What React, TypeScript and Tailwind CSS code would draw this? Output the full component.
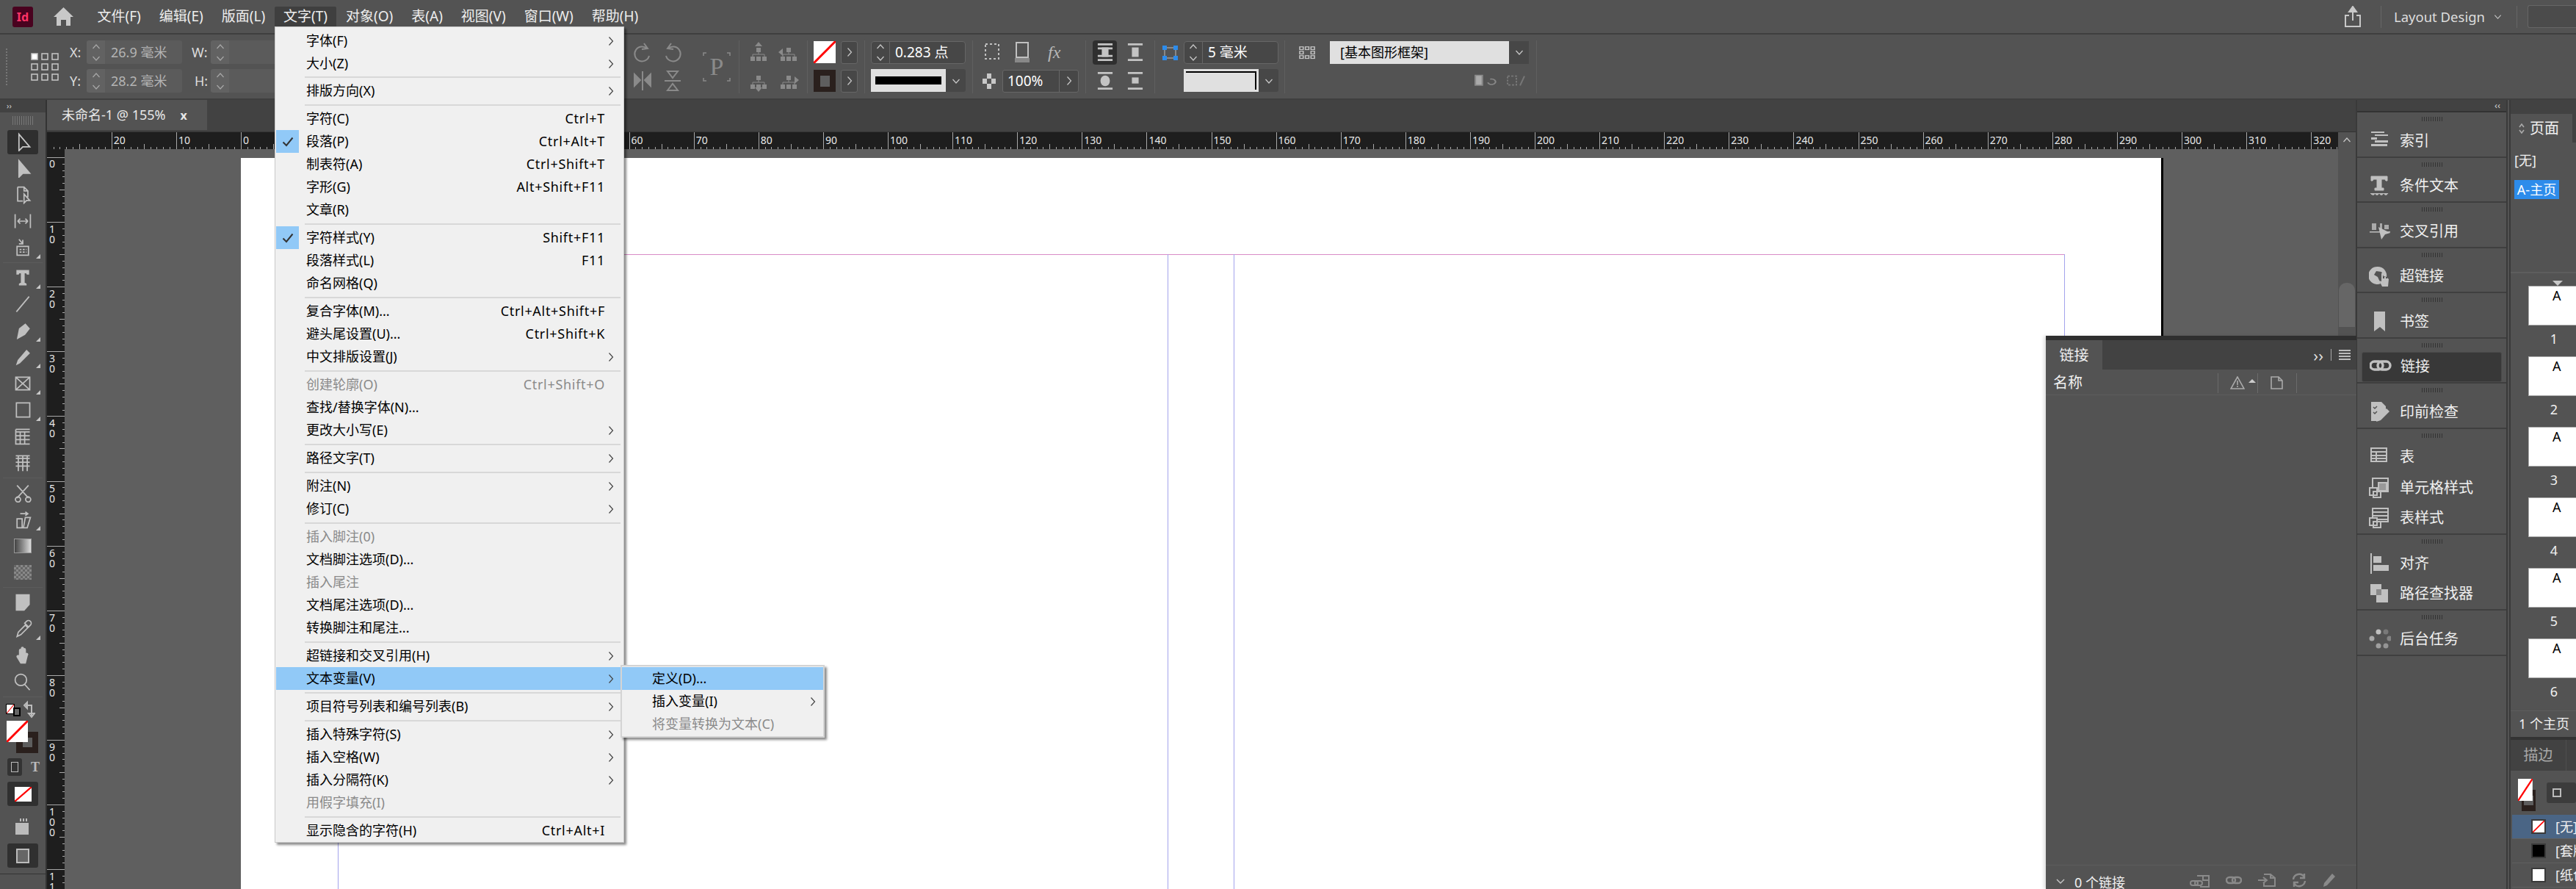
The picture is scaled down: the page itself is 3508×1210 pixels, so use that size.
import type { ReactNode } from "react";

const menuBar = ["文件(F)", "编辑(E)", "版面(L)", "文字(T)", "对象(O)", "表(A)", "视图(V)", "窗口(W)", "帮助(H)"];

type Row = { label?: string; keys?: string; arrow?: boolean; off?: boolean; check?: boolean; hot?: boolean; sep?: boolean; thin?: boolean };

const typeMenu: Row[] = [
  { label: "字体(F)", arrow: true },
  { label: "大小(Z)", arrow: true },
  { sep: true, thin: true },
  { label: "排版方向(X)", arrow: true },
  { sep: true },
  { label: "字符(C)", keys: "Ctrl+T" },
  { label: "段落(P)", keys: "Ctrl+Alt+T", check: true },
  { label: "制表符(A)", keys: "Ctrl+Shift+T" },
  { label: "字形(G)", keys: "Alt+Shift+F11" },
  { label: "文章(R)" },
  { sep: true },
  { label: "字符样式(Y)", keys: "Shift+F11", check: true },
  { label: "段落样式(L)", keys: "F11" },
  { label: "命名网格(Q)" },
  { sep: true },
  { label: "复合字体(M)...", keys: "Ctrl+Alt+Shift+F" },
  { label: "避头尾设置(U)...", keys: "Ctrl+Shift+K" },
  { label: "中文排版设置(J)", arrow: true },
  { sep: true },
  { label: "创建轮廓(O)", keys: "Ctrl+Shift+O", off: true },
  { label: "查找/替换字体(N)..." },
  { label: "更改大小写(E)", arrow: true },
  { sep: true },
  { label: "路径文字(T)", arrow: true },
  { sep: true },
  { label: "附注(N)", arrow: true },
  { label: "修订(C)", arrow: true },
  { sep: true },
  { label: "插入脚注(0)", off: true },
  { label: "文档脚注选项(D)..." },
  { label: "插入尾注", off: true },
  { label: "文档尾注选项(D)..." },
  { label: "转换脚注和尾注..." },
  { sep: true },
  { label: "超链接和交叉引用(H)", arrow: true },
  { label: "文本变量(V)", arrow: true, hot: true },
  { sep: true },
  { label: "项目符号列表和编号列表(B)", arrow: true },
  { sep: true },
  { label: "插入特殊字符(S)", arrow: true },
  { label: "插入空格(W)", arrow: true },
  { label: "插入分隔符(K)", arrow: true },
  { label: "用假字填充(I)", off: true },
  { sep: true },
  { label: "显示隐含的字符(H)", keys: "Ctrl+Alt+I" },
];

const Chevron = ({ dark = false }: { dark?: boolean }) => (
  <svg width="8" height="14" viewBox="0 0 8 14" fill="none" stroke={dark ? "#444" : "#c8c8c8"} strokeWidth="1.2">
    <path d="M1.5 1.5 6.5 7l-5 5.5" />
  </svg>
);

const Down = ({ size = 12 }: { size?: number }) => (
  <svg width={size} height={size} viewBox="0 0 12 12" fill="none" stroke="#c8c8c8" strokeWidth="1.2">
    <path d="M1.5 4 6 9l4.5-5" />
  </svg>
);

const Up = () => (
  <svg width="12" height="12" viewBox="0 0 12 12" fill="none" stroke="#c8c8c8" strokeWidth="1.2">
    <path d="M1.5 8 6 3l4.5 5" />
  </svg>
);

const NoneSwatch = ({ className }: { className: string }) => (
  <svg className={className} viewBox="0 0 30 30" preserveAspectRatio="none">
    <rect width="30" height="30" fill="#fff" />
    <path d="M0 30 30 0" stroke="#f00" strokeWidth="3" />
  </svg>
);

function MenuRow({ row }: { row: Row }) {
  if (row.sep) {
    return (
      <div className={`flex items-center pl-[39px] pr-[3px] ${row.thin ? "h-[6px]" : "h-[7px]"}`}>
        <div className="h-[2px] w-full bg-[#d8d8d8]" />
      </div>
    );
  }
  return (
    <div className={`flex h-[31px] items-center ${row.hot ? "bg-[#91c9f7]" : ""} ${row.off ? "text-[#8a8a8a]" : "text-black"}`}>
      <div className={`mr-[10px] flex h-[31px] w-[31px] items-center justify-center ${row.check ? "bg-[#91c9f7]" : ""}`}>
        {row.check && (
          <svg width="16" height="14" viewBox="0 0 16 14" fill="none" stroke="#333" strokeWidth="2">
            <path d="M1.5 7.5 6 12 14.5 1.5" />
          </svg>
        )}
      </div>
      <span className="flex-1 whitespace-nowrap">{row.label}</span>
      {row.keys && <span className="mr-[24px] whitespace-nowrap tracking-[0.7px]">{row.keys}</span>}
      {row.arrow && (
        <span className="mr-[12px]">
          <Chevron dark />
        </span>
      )}
    </div>
  );
}

function TypeMenu() {
  return (
    <div className="absolute left-[374px] top-[36px] w-[476px] border border-[#c8c8c8] bg-[#f0f0f0] px-px pt-[3px] text-[18px] shadow-[3px_3px_3px_rgba(0,0,0,0.45)]">
      {typeMenu.map((row, i) => (
        <MenuRow key={i} row={row} />
      ))}
    </div>
  );
}

function SubMenu() {
  return (
    <div className="absolute left-[845px] top-[905px] w-[278px] border-2 border-[#d4d4d4] bg-[#f0f0f0] py-px text-[18px] shadow-[3px_3px_3px_rgba(0,0,0,0.45)]">
      <div className="flex h-[31px] items-center bg-[#91c9f7] pl-[41px] text-black">定义(D)...</div>
      <div className="flex h-[31px] items-center justify-between pl-[41px] pr-[10px] text-black">
        插入变量(I)
        <Chevron dark />
      </div>
      <div className="flex h-[31px] items-center pl-[41px] text-[#8a8a8a]">将变量转换为文本(C)</div>
    </div>
  );
}

function TopBar() {
  return (
    <div className="flex h-[45px] items-center text-[19px] text-[#eeeeee]">
      <div className="ml-[17px] flex h-[28px] w-[28px] items-center justify-center rounded-[3px] bg-[#49021f] text-[16px] font-bold text-[#ff3366]">
        Id
      </div>
      <svg className="ml-[28px]" width="27" height="25" viewBox="0 0 27 25" fill="#c8c8c8">
        <path d="M13.5 0 27 13h-4v12h-6v-8h-7v8H4V13H0z" />
      </svg>
      <div className="ml-[20px] flex items-center">
        {menuBar.map((m) => (
          <div key={m} className={`mx-[0.5px] flex h-[28px] items-center rounded-t-[2px] px-[12px] ${m === "文字(T)" ? "bg-[#3f3f3f]" : ""}`}>
            {m}
          </div>
        ))}
      </div>
      <div className="ml-auto flex items-center">
        <svg width="24" height="30" viewBox="0 0 24 30" fill="none" stroke="#c8c8c8" strokeWidth="2">
          <path d="M7 13H2v15h20V13h-5M12 20V3" />
          <path d="M7 8l5-7 5 7z" fill="#c8c8c8" />
        </svg>
        <div className="ml-[26px] h-[30px] w-px bg-[#666]" />
        <span className="ml-[17px] whitespace-nowrap text-[18.5px] text-[#dddddd]">Layout Design</span>
        <span className="ml-[12px]">
          <Down size={11} />
        </span>
        <div className="ml-[20px] h-[30px] w-px bg-[#666]" />
        <div className="ml-[14px] h-[31px] w-[66px] rounded-l-[3px] border border-[#666] border-r-0 bg-[#4b4b4b]" />
      </div>
    </div>
  );
}

const Divider = () => <div className="mx-[5px] h-[72px] w-px shrink-0 bg-[#5f5f5f]" />;

function Field({ label, value, labelCls, w }: { label: string; value?: string; labelCls: string; w: string }) {
  return (
    <div className="flex h-[32px] items-center">
      <span className={`whitespace-nowrap text-[18px] text-[#dddddd] ${labelCls}`}>{label}</span>
      <div className={`flex h-[32px] items-center rounded-[3px] bg-[#5b5b5b] ${w}`}>
        <div className="flex h-full w-[25px] flex-col items-center justify-center gap-[3px] rounded-l-[3px] bg-[#656565] opacity-70">
          <Up />
          <Down />
        </div>
        <span className="ml-[8px] whitespace-nowrap text-[18px] text-[#b4b4b4]">{value}</span>
      </div>
    </div>
  );
}

function Stepper({ value }: { value: string }) {
  return (
    <div className="flex h-[31px] w-[129px] items-center rounded-[4px] border border-[#666] bg-[#474747]">
      <div className="flex h-full w-[25px] flex-col items-center justify-center gap-[3px] border-r border-[#666]">
        <Up />
        <Down />
      </div>
      <span className="ml-[7px] flex-1 whitespace-nowrap text-[19px] text-white">{value}</span>
    </div>
  );
}

function ControlBar() {
  const gray = "#8a8a8a";
  return (
    <div className="flex h-[91px] items-center overflow-hidden border-y-2 border-[#3f3f3f] bg-[#535353] py-[7px]">
      <div className="ml-[8px] h-[50px] w-[2px] shrink-0 border-l-2 border-dotted border-[#777]" />
      <svg className="ml-[32px] shrink-0" width="38" height="38" viewBox="0 0 38 38" fill="none" stroke="#c8c8c8" strokeWidth="1.5">
        {[0, 14, 28].map((y) =>
          [0, 14, 28].map((x) => <rect key={`${x}-${y}`} x={x + 1} y={y + 1} width="8" height="8" fill={x + y === 0 ? "#fff" : "none"} />),
        )}
      </svg>
      <div className="ml-[15px] flex shrink-0 flex-col gap-[7px]">
        <Field label="X:" value="26.9 毫米" labelCls="w-[23px]" w="w-[130px]" />
        <Field label="Y:" value="28.2 毫米" labelCls="w-[23px]" w="w-[130px]" />
      </div>
      <div className="ml-[13px] flex shrink-0 flex-col gap-[7px]">
        <Field label="W:" labelCls="w-[26px]" w="w-[560px]" />
        <Field label="H:" labelCls="w-[26px] pl-[4px]" w="w-[560px]" />
      </div>

      <div className="ml-[7px] grid w-[82px] shrink-0 grid-cols-2 gap-y-[6px]">
        {[0, 1, 2, 3].map((i) => (
          <div key={i} className="flex h-[32px] items-center justify-center">
            <svg width="26" height="30" viewBox="0 0 26 30" fill="none" stroke={gray} strokeWidth="2">
              {i < 2 ? (
                <path d={i === 0 ? "M19 9a10 10 0 1 0 3 10M15 2l5 7-8 1" : "M7 9a10 10 0 1 1-3 10M11 2 6 9l8 1"} />
              ) : (
                <path d={i === 2 ? "M13 2v26M2 6l8 8-8 8zM24 6l-8 8 8 8z" : "M2 15h22M6 2l7 9 7-9zM6 28l7-9 7 9z"} fill={i === 2 ? gray : "none"} />
              )}
            </svg>
          </div>
        ))}
      </div>
      <svg className="ml-[21px] shrink-0" width="38" height="40" viewBox="0 0 38 40" fill="none" stroke="#8a8a8a" strokeWidth="1.5">
        <path d="M1 5V1h4M33 1h4v4M1 35v4h4M33 39h4v-4" />
        <text x="19" y="31" textAnchor="middle" fontFamily="'Liberation Serif', serif" fontSize="34" fill="#8a8a8a" stroke="none">
          P
        </text>
      </svg>
      <div className="ml-[6px]">
        <Divider />
      </div>
      <div className="grid w-[82px] shrink-0 grid-cols-2 gap-y-[6px]">
        {[0, 1, 2, 3].map((i) => (
          <div key={i} className="flex h-[32px] items-center justify-center">
            <svg width="28" height="30" viewBox="0 0 28 30" fill={gray}>
              <path d="M11 8h6v6h-6zM3 20h6v6H3zM11 20h6v6h-6zM19 20h6v6h-6z" />
              <path d="M14 14v3M6 20v-3h16v3" stroke={gray} fill="none" />
              <path d={i === 0 ? "M14 0l5 6H9z" : i === 2 ? "M14 30l5-6H9z" : i === 1 ? "M0 14l6-5v10z" : "M28 14l-6-5v10z"} />
            </svg>
          </div>
        ))}
      </div>
      <Divider />
      <div className="ml-[3px] flex shrink-0 flex-col gap-[7px]">
        <div className="flex h-[32px] items-center gap-[7px]">
          <NoneSwatch className="h-[30px] w-[30px]" />
          <div className="flex h-[31px] w-[23px] items-center justify-center rounded-[3px] border border-[#666] bg-[#474747]">
            <Chevron />
          </div>
        </div>
        <div className="flex h-[32px] items-center gap-[7px]">
          <div className="flex h-[30px] w-[30px] items-center justify-center bg-[#2a201d]">
            <div className="h-[15px] w-[13px] bg-[#5e5e5e]" />
          </div>
          <div className="flex h-[31px] w-[23px] items-center justify-center rounded-[3px] border border-[#666] bg-[#474747]">
            <Chevron />
          </div>
        </div>
      </div>
      <div className="ml-[4px]">
        <Divider />
      </div>
      <div className="ml-[3px] flex shrink-0 flex-col gap-[7px]">
        <Stepper value="0.283 点" />
        <div className="flex h-[31px] w-[129px] items-center rounded-[3px] bg-[#474747]">
          <div className="flex h-full w-[102px] items-center justify-center bg-[#e0e0e0]">
            <div className="h-[11px] w-[90px] bg-black" />
          </div>
          <div className="flex flex-1 justify-center">
            <Down />
          </div>
        </div>
      </div>
      <div className="ml-[4px]">
        <Divider />
      </div>
      <div className="ml-[8px] flex w-[131px] shrink-0 flex-col gap-[7px]">
        <div className="flex h-[32px] items-center pl-[2px]">
          <svg width="24" height="26" viewBox="0 0 24 26" fill="none" stroke="#c0c0c0" strokeWidth="2">
            <rect x="2" y="2" width="18" height="20" strokeDasharray="3 3" />
          </svg>
          <svg className="ml-[18px]" width="20" height="30" viewBox="0 0 20 30">
            <rect x="2" y="2" width="16" height="20" fill="none" stroke="#c0c0c0" strokeWidth="2" />
            <rect x="0" y="23" width="20" height="6" fill="#888" />
          </svg>
          <span className="ml-[25px] font-['Liberation_Serif',serif] text-[24px] italic text-[#b8b8b8]">fx</span>
        </div>
        <div className="flex h-[32px] items-center gap-[9px]">
          <div className="h-[21px] w-[18px] shrink-0 bg-[repeating-conic-gradient(#c8c8c8_0_25%,#555_0_50%)] bg-[length:12px_14px]" />
          <div className="flex h-[31px] w-[104px] items-center rounded-[3px] border border-[#666] bg-[#474747]">
            <span className="ml-[6px] flex-1 text-[19px] text-white">100%</span>
            <div className="flex h-full w-[26px] items-center justify-center border-l border-[#666]">
              <Chevron />
            </div>
          </div>
        </div>
      </div>
      <div className="ml-[4px]">
        <Divider />
      </div>
      <div className="ml-[4px] grid w-[74px] shrink-0 grid-cols-[33px_33px] gap-x-[8px] gap-y-[6px]">
        {[0, 1, 2, 3].map((i) => (
          <div key={i} className={`flex h-[33px] items-center justify-center rounded-[4px] ${i === 0 ? "bg-[#2f2f2f]" : ""}`}>
            <svg width="22" height="26" viewBox="0 0 24 26" fill="#c4c4c4">
              <path d="M1 0h22v3H1zM1 23h22v3H1z" />
              {i === 2 ? <ellipse cx="12" cy="13" rx="7" ry="8" /> : <rect x="7" y={i === 3 ? 8 : 6} width="10" height={i === 3 ? 9 : 14} />}
              {i === 0 && <path d="M1 6h22v3H1zM1 17h22v3H1z" />}
            </svg>
          </div>
        ))}
      </div>
      <div className="ml-[5px]">
        <Divider />
      </div>
      <div className="ml-[5px] flex shrink-0 flex-col gap-[7px]">
        <div className="flex items-center gap-[8px]">
          <svg width="21" height="20" viewBox="0 0 21 20" fill="#2d8ceb">
            <path d="M0 0h6v6H0zM15 0h6v6h-6zM0 14h6v6H0zM15 14h6v6h-6z" />
            <path d="M6 3h9M6 17h9M3 6v8M18 6v8" stroke="#888" strokeWidth="2" />
          </svg>
          <Stepper value="5 毫米" />
        </div>
        <div className="ml-[29px] flex h-[31px] w-[129px] items-center rounded-[3px] bg-[#474747]">
          <div className="h-full w-[102px] bg-[#e0e0e0] p-[3px]">
            <div className="h-full border-r-2 border-t-2 border-black" />
          </div>
          <div className="flex flex-1 justify-center">
            <Down />
          </div>
        </div>
      </div>
      <div className="ml-[3px]">
        <Divider />
      </div>
      <svg className="mb-[38px] ml-[14px] shrink-0" width="23" height="18" viewBox="0 0 24 24" preserveAspectRatio="none" fill="none" stroke="#c4c4c4" strokeWidth="1.6">
        <rect x="1" y="1" width="5" height="5" />
        <rect x="9" y="1" width="5" height="5" />
        <rect x="17" y="1" width="5" height="5" />
        <rect x="1" y="9" width="5" height="5" />
        <rect x="17" y="9" width="5" height="5" />
        <rect x="1" y="17" width="5" height="5" />
        <rect x="9" y="17" width="5" height="5" />
        <rect x="17" y="17" width="5" height="5" />
      </svg>
      <div className="ml-[19px] flex w-[271px] shrink-0 flex-col gap-[7px]">
        <div className="flex h-[31px] items-center bg-[#474747]">
          <div className="flex h-full w-[244px] items-center bg-[#e0e0e0] pl-[14px] text-[18px] text-black">[基本图形框架]</div>
          <div className="flex flex-1 justify-center">
            <Down />
          </div>
        </div>
        <div className="flex h-[32px] items-center justify-end gap-[12px] pr-[4px]">
          <svg width="32" height="18" viewBox="0 0 30 24" preserveAspectRatio="none" fill="none" stroke="#888" strokeWidth="2">
            <rect x="1" y="2" width="9" height="18" fill="#aaa" />
            <path d="M20 9a5 5 0 1 1-3 6" />
          </svg>
          <svg width="26" height="16" viewBox="0 0 26 20" preserveAspectRatio="none" fill="none" stroke="#777" strokeWidth="2">
            <rect x="1" y="2" width="12" height="15" strokeDasharray="3 2" />
            <path d="M24 2 18 18" />
          </svg>
        </div>
      </div>
      <div className="ml-[5px]">
        <Divider />
      </div>
    </div>
  );
}

// toolbar icons, all in a 30x30 box
const toolPaths: { d: string; fill?: boolean; corner?: boolean }[] = [
  { d: "M9 3v26l6-6h11z" },
  { d: "M9 3v26l6-6h11z", fill: true },
  { d: "M7 3h10l6 6v10M7 3v22h8M17 3v6h6M17 14v14l4-4h5z" },
  { d: "M3 4v22M27 4v22M7 15h16M7 15l4-4M7 15l4 4M23 15l-4-4M23 15l-4 4" },
  { d: "M6 13h18v14H6zM10 18h3M15 18h3M20 18h1M10 22h3M15 22h3M20 22h1M9 2l6 7M15 3v6h-6", corner: true },
  { d: "M6 4h18v5h-2l-1-2h-4v16l3 2v1H10v-1l3-2V7H9L8 9H6z", fill: true, corner: true },
  { d: "M5 27 25 3" },
  { d: "M7 27l3-15 9-7 6 7-7 9zM7 27l8-8", fill: true, corner: true },
  { d: "M6 26l2-6L21 5l4 4L10 24zM6 26l4-2", fill: true, corner: true },
  { d: "M4 5h22v20H4zM4 5l22 20M26 5 4 25", corner: true },
  { d: "M5 4h21v22H5z", corner: true },
  { d: "M4 4h22M4 8h22M4 4v24M4 14h22M4 20h22M4 27h22M11 8v6M18 8v6M11 14v13M18 14v13" },
  { d: "M4 4h22M4 8h22M8 4v24M15 4v24M22 4v24M4 14h22M4 20h22" },
  { d: "M6 3l18 20M24 3 6 23M10 22a4 4 0 1 1-6 5 4 4 0 0 1 6-5zM26 22a4 4 0 1 1-6 5 4 4 0 0 1 6-5z" },
  { d: "M6 14h8v14H6zM19 12h8l-5 16h-6zM11 6h12M19 3l4 3-4 3", corner: true },
];

function ToolIcon({ d, fill, corner }: { d: string; fill?: boolean; corner?: boolean }) {
  return (
    <div className="relative flex h-[36px] w-full items-center justify-center">
      <svg width="26" height="26" viewBox="0 0 30 30" fill={fill ? "#c0c0c0" : "none"} stroke="#c0c0c0" strokeWidth="2">
        <path d={d} />
      </svg>
      {corner && <div className="absolute bottom-[3px] right-[7px] h-0 w-0 border-b-[6px] border-l-[6px] border-b-[#c8c8c8] border-l-transparent" />}
    </div>
  );
}

const ToolSep = () => <div className="mx-[4px] my-[2px] h-px bg-[#5c5c5c]" />;

function Toolbar() {
  return (
    <div className="flex w-[64px] shrink-0 flex-col border-r-2 border-[#333] bg-[#535353]">
      <div className="flex h-[17px] items-center bg-[#424242] pl-[9px] text-[11px] text-[#ccc]">››</div>
      <div className="mx-auto mt-[5px] h-[12px] w-[28px] bg-[repeating-linear-gradient(90deg,#777_0_1px,transparent_1px_3px)]" />
      <div className="mt-[5px] flex h-[36px] items-center justify-center">
        <div className="flex h-[33px] w-[42px] items-center justify-center rounded-[3px] bg-[#2f2f2f]">
          <svg width="26" height="26" viewBox="0 0 30 30" fill="none" stroke="#c8c8c8" strokeWidth="2">
            <path d="M9 3v26l6-6h11z" />
          </svg>
        </div>
      </div>
      {toolPaths.slice(1, 5).map((t, i) => (
        <ToolIcon key={i} {...t} />
      ))}
      <ToolSep />
      {toolPaths.slice(5, 13).map((t, i) => (
        <ToolIcon key={i} {...t} />
      ))}
      <ToolSep />
      <ToolIcon {...toolPaths[13]} />
      <ToolIcon {...toolPaths[14]} />
      <div className="flex h-[36px] items-center justify-center">
        <div className="h-[20px] w-[24px] border border-[#999] bg-gradient-to-r from-[#444] to-[#ddd]" />
      </div>
      <div className="flex h-[36px] items-center justify-center">
        <div className="h-[20px] w-[24px] bg-[repeating-conic-gradient(#888_0_25%,#666_0_50%)] bg-[length:6px_6px]" />
      </div>
      <ToolSep />
      <ToolIcon d="M5 3h20v15l-8 9H5zM9 9h12M9 14h12M9 19h6" fill />
      <ToolIcon d="M6 27l2-7L19 9l4 4L12 24zM18 6l6 6 3-3a3 3 0 0 0-6-6z" corner />
      <ToolIcon d="M10 16V7a1.5 1.5 0 0 1 3 0v7V4a1.5 1.5 0 0 1 3 0v10V6a1.5 1.5 0 0 1 3 0v9l2-3c2 0 2 2 1 3l-3 12H12L6 17c0-2 2-2 4-1z" fill />
      <ToolIcon d="M12 3a9 9 0 1 1 0 18 9 9 0 0 1 0-18zM18 19l8 9" />
      <ToolSep />
      <div className="flex h-[28px] items-center pl-[8px]">
        <NoneSwatch className="h-[14px] w-[12px] border border-black" />
        <div className="ml-[-2px] mt-[8px] h-[12px] w-[10px] border-2 border-black bg-[#666]" />
        <svg className="ml-[4px]" width="16" height="26" viewBox="0 0 16 26" fill="none" stroke="#bbb" strokeWidth="2">
          <path d="M3 8h8v14M1 8l4-4v8zM11 24l-4-5h8z" />
        </svg>
      </div>
      <div className="ml-[9px] mt-[2px] flex h-[44px] w-[43px] items-start">
        <NoneSwatch className="z-10 h-[29px] w-[29px]" />
        <div className="ml-[-16px] mt-[15px] flex h-[29px] w-[30px] items-center justify-center bg-[#2a201d]">
          <div className="h-[13px] w-[13px] bg-[#5e5e5e]" />
        </div>
      </div>
      <div className="ml-[10px] mt-[7px] flex h-[24px] items-center gap-[12px]">
        <div className="flex h-[24px] w-[20px] items-center justify-center rounded-[3px] bg-[#333]">
          <div className="h-[14px] w-[10px] border border-[#bbb]" />
        </div>
        <span className="font-['Liberation_Serif',serif] text-[18px] font-bold text-[#bbb]">T</span>
      </div>
      <div className="relative mx-auto mt-[8px] flex h-[33px] w-[42px] items-center justify-center rounded-[3px] bg-[#303030]">
        <NoneSwatch className="h-[20px] w-[23px]" />
      </div>
      <div className="mt-[10px] flex h-[36px] items-center justify-center">
        <svg width="24" height="26" viewBox="0 0 24 26" fill="#bbb">
          <path d="M2 8h18v16H2z" />
          <path d="M8 2h2v4H8zM12 2h2v4h-2zM16 2h2v4h-2z" />
        </svg>
      </div>
      <div className="mx-auto mt-[5px] flex h-[33px] w-[42px] items-center justify-center rounded-[3px] bg-[#303030]">
        <div className="h-[20px] w-[18px] border-2 border-[#bbb] bg-[#666]" />
      </div>
      <div className="mt-[8px] h-px bg-[#333]" />
    </div>
  );
}

function HRuler() {
  const unit = 8.81;
  const originX = 264; // 0 sits at x=328 on screen, the ruler starts at 64
  const ticks = Array.from({ length: 355 }, (_, i) => i - 29);
  return (
    <svg width="3120" height="23" className="block bg-[#1e1e1e]">
      {ticks.map((t) => {
        const x = Math.round(originX + t * unit) + 0.5;
        const h = t % 10 === 0 ? 23 : t % 5 === 0 ? 7 : 3;
        return <line key={t} x1={x} x2={x} y1={23 - h} y2={23} stroke="#a8a8a8" strokeWidth="1" />;
      })}
      {ticks
        .filter((t) => t % 10 === 0)
        .map((t) => (
          <text key={t} x={originX + t * unit + 3} y="16" fontSize="14" fill="#e8e8e8">
            {Math.abs(t)}
          </text>
        ))}
    </svg>
  );
}

function VRuler() {
  const unit = 8.81;
  const ticks = Array.from({ length: 115 }, (_, i) => i);
  return (
    <svg width="24" height="1007" className="block shrink-0 bg-[#1e1e1e]">
      {ticks.map((t) => {
        const y = Math.round(11 + t * unit) + 0.5;
        const w = t % 10 === 0 ? 24 : t % 5 === 0 ? 7 : 3;
        return <line key={t} x1={24 - w} x2={24} y1={y} y2={y} stroke="#a8a8a8" strokeWidth="1" />;
      })}
      {ticks
        .filter((t) => t % 10 === 0)
        .map((t) =>
          String(t)
            .split("")
            .map((c, i) => (
              <text key={`${t}-${i}`} x="7" y={t === 0 ? 25 : 11 + t * unit + 15 + i * 14} textAnchor="middle" fontSize="14" fill="#e8e8e8">
                {c}
              </text>
            )),
        )}
    </svg>
  );
}

function Canvas() {
  return (
    <div className="relative min-w-0 flex-1 bg-[#5f5f5f]">
      <div className="absolute bottom-0 left-[240px] top-[12px] w-[2618px] border-r-[3px] border-black bg-white">
        <div className="absolute left-[132px] right-[131px] top-[131px] h-px bg-[#d88cc6]" />
        <div className="absolute bottom-0 left-[132px] top-[131px] w-px bg-[#a3a3ec]" />
        <div className="absolute bottom-0 left-[1262px] top-[131px] w-px bg-[#a3a3ec]" />
        <div className="absolute bottom-0 left-[1352px] top-[131px] w-px bg-[#a3a3ec]" />
        <div className="absolute bottom-0 right-[131px] top-[131px] w-px bg-[#a3a3ec]" />
      </div>
    </div>
  );
}

function DocArea() {
  return (
    <div className="flex w-[3144px] shrink-0 flex-col">
      <div className="flex h-[44px] items-end border-b border-[#333] bg-[#424242] pb-[2px]">
        <div className="flex h-[41px] w-[218px] items-center gap-[20px] bg-[#535353] pl-[20px] text-[18px] text-[#e8e8e8]">
          <span className="whitespace-nowrap">未命名-1 @ 155%</span>
          <span className="text-[16px] font-bold">x</span>
        </div>
      </div>
      <div className="flex min-h-0 flex-1">
        <div className="flex min-w-0 flex-1 flex-col">
          <HRuler />
          <div className="flex min-h-0 flex-1">
            <VRuler />
            <Canvas />
          </div>
        </div>
        <div className="flex w-[24px] shrink-0 flex-col items-center bg-[#535353] px-px">
          <div className="mt-[5px]">
            <Up />
          </div>
          <div className="mt-[188px] h-[60px] w-full rounded-t-[10px] bg-[#666]" />
        </div>
      </div>
    </div>
  );
}

function Grip() {
  return <div className="mx-auto h-[6px] w-[28px] bg-[repeating-linear-gradient(90deg,#333_0_1px,transparent_1px_3px)]" />;
}

const dockIcons: Record<string, ReactNode> = {
  索引: <path d="M3 1h18v2H3zM8 5h18v2H8zM3 9h8v3H3zM8 13h18v3H8zM3 18h22v3H3z" fill="#c0c0c0" />,
  条件文本: <path d="M3 1h22v6h-2l-1-2h-5v12h3v3H8v-3h3V5H6L5 7H3zM2 24c3 3 5 3 6 0 2 3 4 3 6 0 2 3 4 3 6 0 2 3 4 3 6 0" fill="#c0c0c0" stroke="#c0c0c0" />,
  交叉引用: (
    <g fill="#c0c0c0">
      <path d="M1 14h28v1.5H1z" />
      <path d="M13 8l16 8-7 2-5 7z" />
      <path d="M4 3h6v9H4zM15 3h3v8h-3zM21 5h6v6h-6z" opacity=".8" />
    </g>
  ),
  超链接: (
    <g fill="#c0c0c0">
      <path d="M12 1a12 12 0 1 0 4 23l-4-9-5-3 3-5 7 1 3 6 4 1A12 12 0 0 0 12 1z" />
      <path d="M17 10h2v7h2v-2h2v2h2v-1l2 2-1 10h-8l-4-8 3 1z" />
    </g>
  ),
  书签: <path d="M7 0h15v27l-7-6-8 6z" fill="#c0c0c0" />,
  链接: (
    <g fill="none" stroke="#c0c0c0" strokeWidth="3.4">
      <rect x="1" y="7" width="17" height="11" rx="5.5" />
      <rect x="11" y="7" width="17" height="11" rx="5.5" />
    </g>
  ),
  印前检查: (
    <g fill="#c0c0c0">
      <path d="M3 0h14l6 6v8l-10 12H3z" />
      <path d="M10 27l2-6 12-12 4 4-12 12z" />
      <path d="M6 7l2 2 3-3M6 14l2 2 3-3" fill="none" stroke="#535353" strokeWidth="1.5" />
    </g>
  ),
  表: (
    <g fill="none" stroke="#c0c0c0" strokeWidth="2">
      <rect x="3" y="2" width="21" height="18" />
      <path d="M3 7h21M3 12h21M3 16h21M10 7v13" />
    </g>
  ),
  单元格样式: (
    <g fill="none" stroke="#c0c0c0" strokeWidth="2">
      <rect x="5" y="1" width="21" height="18" />
      <rect x="13" y="7" width="11" height="11" fill="#999" />
      <rect x="1" y="14" width="10" height="10" fill="#535353" />
      <rect x="6" y="19" width="10" height="8" />
    </g>
  ),
  表样式: (
    <g fill="none" stroke="#c0c0c0" strokeWidth="2">
      <rect x="5" y="1" width="21" height="18" />
      <path d="M5 6h21M5 11h21M5 16h21" />
      <rect x="1" y="14" width="10" height="10" fill="#535353" />
      <rect x="6" y="19" width="10" height="8" />
    </g>
  ),
  对齐: <path d="M2 0h2v28H2zM6 4h11v9H6zM6 16h21v8H6z" fill="#c0c0c0" />,
  路径查找器: (
    <g>
      <rect x="2" y="1" width="15" height="15" fill="#c0c0c0" />
      <rect x="10" y="8" width="16" height="18" fill="#c0c0c0" />
      <rect x="10" y="8" width="7" height="8" fill="#8a8a8a" />
    </g>
  ),
  后台任务: (
    <g fill="#c0c0c0">
      <circle cx="13" cy="4" r="3.5" />
      <circle cx="23" cy="4" r="3.5" opacity=".35" />
      <circle cx="4" cy="13" r="3.5" opacity=".8" />
      <circle cx="28" cy="13" r="3.5" opacity=".45" />
      <circle cx="13" cy="23" r="3.5" opacity=".7" />
      <circle cx="23" cy="23" r="3.5" opacity=".6" />
    </g>
  ),
};

const dockGroups = [
  ["索引"],
  ["条件文本"],
  ["交叉引用"],
  ["超链接"],
  ["书签"],
  ["链接"],
  ["印前检查"],
  ["表", "单元格样式", "表样式"],
  ["对齐", "路径查找器"],
  ["后台任务"],
];

function Dock() {
  return (
    <div className="mr-[2px] flex w-[207px] shrink-0 flex-col border-x-2 border-[#3a3a3a] bg-[#535353]">
      <div className="flex h-[17px] items-center justify-end border-b-2 border-[#333] bg-[#424242] pr-[8px] text-[13px] leading-none text-[#ccc]">‹‹</div>
      {dockGroups.map((group) => (
        <div key={group[0]} className="border-b-2 border-[#3f3f3f] pt-[6px]">
          <Grip />
          <div className="mt-[6px] flex flex-col">
            {group.map((name) => (
              <div
                key={name}
                className={`flex h-[41.5px] items-center text-[20px] text-[#f0f0f0] ${name === "链接" ? "mx-[6px] rounded-[3px] border border-[#4a4a4a] bg-[#383838] pl-[10px]" : "pl-[16px]"}`}
              >
                <svg width="30" height="28" viewBox="0 0 30 28" className="shrink-0">
                  {dockIcons[name]}
                </svg>
                <span className="ml-[12px]">{name}</span>
              </div>
            ))}
          </div>
        </div>
      ))}
    </div>
  );
}

function PagesPanel() {
  return (
    <div className="flex min-w-0 flex-1 flex-col overflow-hidden border-l-2 border-[#3a3a3a] bg-[#535353]">
      <div className="h-[19px] shrink-0 bg-[#424242]" />
      <div className="flex h-[39px] shrink-0 bg-[#424242]">
        <div className="flex w-[84px] items-center gap-[6px] bg-[#535353] pl-[11px] text-[20px] text-[#f0f0f0]">
          <svg width="8" height="14" viewBox="0 0 8 14" fill="none" stroke="#aaa" strokeWidth="1.6">
            <path d="M1 5l3-4 3 4M1 9l3 4 3-4" />
          </svg>
          <span className="ml-[1px]">页面</span>
        </div>
      </div>
      <div className="flex h-[178px] shrink-0 flex-col border-b-2 border-[#5d5d5d] pl-[5px] pt-[11px] text-[18px] text-[#f0f0f0]">
        <span className="h-[40px] leading-[26px]">[无]</span>
        <span className="flex h-[26px] w-[61px] items-center justify-center whitespace-nowrap bg-[#2d8ceb] text-[18px] text-white">A-主页</span>
      </div>
      <div className="ml-[57px] mt-[10px] h-0 w-0 border-x-[7px] border-t-[7px] border-x-transparent border-t-[#c8c8c8]" />
      <div className="flex h-[578px] shrink-0 flex-col pl-[24px]">
        {[1, 2, 3, 4, 5, 6].map((n) => (
          <div key={n} className="flex h-[96px] shrink-0 flex-col">
            <div className="h-[54px] w-[100px] shrink-0 border border-[#aaa] bg-white pl-[32px] text-[18px] leading-[24px] text-black">A</div>
            <div className="w-[70px] pt-[6px] text-center text-[18px] leading-[24px] text-[#f0f0f0]">{n}</div>
          </div>
        ))}
      </div>
      <div className="flex h-[36px] shrink-0 items-center whitespace-nowrap border-t border-[#5d5d5d] pl-[11px] text-[18px] text-[#f0f0f0]">1 个主页</div>
      <div className="h-[4px] shrink-0 bg-[#333]" />
      <div className="flex h-[42px] shrink-0 bg-[#424242]">
        <div className="flex w-[76px] items-center justify-center border-r border-[#4f4f4f] text-[20px] text-[#a8a8a8]">描边</div>
      </div>
      <div className="flex h-[60px] shrink-0 items-start pl-[10px] pt-[11px]">
        <NoneSwatch className="z-10 h-[30px] w-[30px]" />
        <div className="ml-[-15px] mt-[15px] flex h-[29px] w-[29px] items-center justify-center bg-[#2a201d]">
          <div className="h-[13px] w-[13px] bg-[#5e5e5e]" />
        </div>
        <div className="ml-[15px] mt-[5px] flex h-[28px] w-[40px] shrink-0 items-center rounded-[3px] bg-[#3c3c3c] pl-[8px]">
          <div className="h-[12px] w-[12px] border-2 border-[#bbb]" />
        </div>
      </div>
      {[
        { name: "[无]", on: true },
        { name: "[套版色]", fill: "bg-black" },
        { name: "[纸色]", fill: "bg-white" },
      ].map((r) => (
        <div key={r.name} className={`ml-[2px] flex h-[33px] shrink-0 items-center whitespace-nowrap border-b border-[#5f5f5f] pl-[26px] text-[18px] text-[#f0f0f0] ${r.on ? "bg-[#4a6585]" : ""}`}>
          <div className="h-[20px] w-[20px] shrink-0 border-2 border-[#3a3a3a]">
            {r.on ? <NoneSwatch className="h-full w-full" /> : <div className={`h-full w-full ${r.fill}`} />}
          </div>
          <span className="ml-[13px]">{r.name}</span>
        </div>
      ))}
    </div>
  );
}

function LinksPanel() {
  return (
    <div className="absolute left-[2786px] top-[457px] flex h-[753px] w-[423px] flex-col border-t-[6px] border-[#2f2f2f] bg-[#535353] shadow-[-3px_0_4px_rgba(0,0,0,0.12)]">
      <div className="flex h-[40px] shrink-0 items-center bg-[#424242]">
        <div className="flex h-full w-[77px] items-center justify-center bg-[#535353] pt-[2px] text-[20px] text-[#f0f0f0]">链接</div>
        <div className="ml-auto flex items-center pr-[8px]">
          <span className="text-[22px] leading-none text-[#ddd]">››</span>
          <div className="ml-[10px] h-[16px] w-px bg-[#aaa]" />
          <div className="ml-[10px] flex w-[16px] flex-col gap-[2px]">
            <div className="h-[2px] bg-[#bbb]" />
            <div className="h-[2px] bg-[#bbb]" />
            <div className="h-[2px] bg-[#bbb]" />
            <div className="h-[2px] bg-[#bbb]" />
          </div>
        </div>
      </div>
      <div className="flex h-[35px] shrink-0 items-center border-b border-[#5c5c5c] pl-[10px] pt-[2px] text-[20px] text-[#f0f0f0]">
        <span className="w-[224px]">名称</span>
        <div className="flex h-[27px] w-[54px] items-center border-l border-[#6b6b6b] pl-[16px]">
          <svg width="20" height="18" viewBox="0 0 20 18" fill="none" stroke="#aaa" strokeWidth="1.6">
            <path d="M10 1 1 17h18zM10 6v6M10 13v2" />
          </svg>
          <div className="mb-[6px] ml-[5px] h-0 w-0 border-x-[5px] border-b-[5px] border-x-transparent border-b-[#ccc]" />
        </div>
        <div className="flex h-[27px] w-[54px] items-center border-x border-[#6b6b6b] pl-[17px]">
          <svg width="17" height="18" viewBox="0 0 17 18" fill="none" stroke="#aaa" strokeWidth="1.6">
            <path d="M1 1h10l5 5v11H1zM11 1v5h5" />
          </svg>
        </div>
      </div>
      <div className="flex-1" />
      <div className="flex h-[33px] shrink-0 items-start border-t border-[#5c5c5c] pl-[14px] pt-[10px] text-[18px] leading-[26px] text-[#f0f0f0]">
        <span className="mt-[8px]">
          <svg width="12" height="8" viewBox="0 0 12 8" fill="none" stroke="#c8c8c8" strokeWidth="1.4">
            <path d="M1 1l5 5 5-5" />
          </svg>
        </span>
        <span className="ml-[13px] w-[157px] whitespace-nowrap">0 个链接</span>
        <div className="flex items-center gap-[22px]">
          <svg width="27" height="20" viewBox="0 0 27 20" fill="none" stroke="#8a8a8a" strokeWidth="2">
            <path d="M10 4h16v15H14M18 4v6h7" />
            <rect x="1" y="11" width="10" height="6" rx="3" />
            <rect x="7" y="11" width="10" height="6" rx="3" />
          </svg>
          <svg width="22" height="20" viewBox="0 0 22 20" fill="none" stroke="#8a8a8a" strokeWidth="2.4">
            <rect x="1" y="6" width="12" height="8" rx="4" />
            <rect x="9" y="6" width="12" height="8" rx="4" />
          </svg>
          <svg width="24" height="20" viewBox="0 0 24 20" fill="none" stroke="#8a8a8a" strokeWidth="2">
            <path d="M8 2h9l6 5v11H8v-4M17 2v5h6M0 10h10M7 6l5 4-5 4" />
          </svg>
          <svg width="20" height="20" viewBox="0 0 20 20" fill="none" stroke="#8a8a8a" strokeWidth="2.4">
            <path d="M2 9a8 8 0 0 1 15-3M18 11a8 8 0 0 1-15 3M17 1v6h-6M3 19v-6h6" />
          </svg>
          <svg width="18" height="20" viewBox="0 0 18 20" fill="#8a8a8a">
            <path d="M1 19l1-5L13 1l4 4L6 17z" />
          </svg>
        </div>
      </div>
    </div>
  );
}

export default function App() {
  return (
    <div className="relative flex h-[1210px] w-[3508px] flex-col overflow-hidden bg-[#535353] font-['Noto_Sans','Noto_Sans_CJK_SC',sans-serif]">
      <TopBar />
      <ControlBar />
      <div className="flex min-h-0 flex-1">
        <Toolbar />
        <DocArea />
        <Dock />
        <PagesPanel />
      </div>
      <LinksPanel />
      <TypeMenu />
      <SubMenu />
    </div>
  );
}
